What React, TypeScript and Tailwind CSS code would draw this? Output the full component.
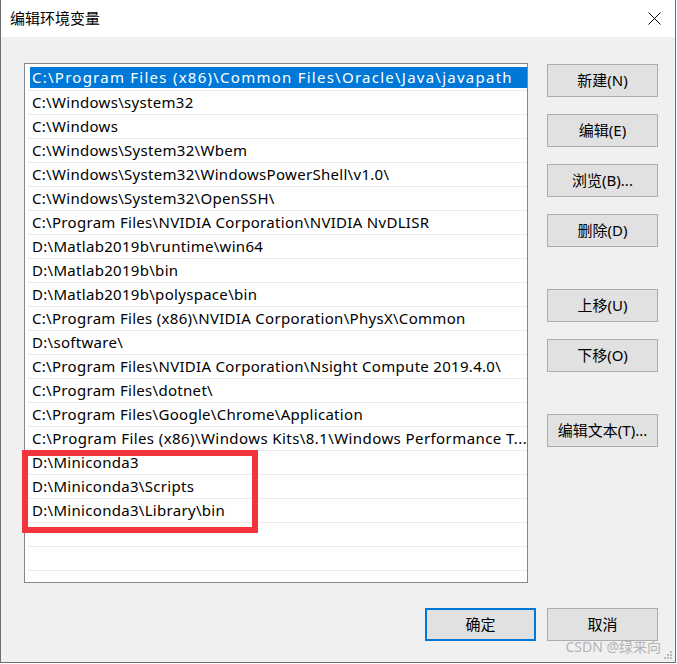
import React from 'react';

const paths: string[] = [
    'C:\\Program Files (x86)\\Common Files\\Oracle\\Java\\javapath',
    'C:\\Windows\\system32',
    'C:\\Windows',
    'C:\\Windows\\System32\\Wbem',
    'C:\\Windows\\System32\\WindowsPowerShell\\v1.0\\',
    'C:\\Windows\\System32\\OpenSSH\\',
    'C:\\Program Files\\NVIDIA Corporation\\NVIDIA NvDLISR',
    'D:\\Matlab2019b\\runtime\\win64',
    'D:\\Matlab2019b\\bin',
    'D:\\Matlab2019b\\polyspace\\bin',
    'C:\\Program Files (x86)\\NVIDIA Corporation\\PhysX\\Common',
    'D:\\software\\',
    'C:\\Program Files\\NVIDIA Corporation\\Nsight Compute 2019.4.0\\',
    'C:\\Program Files\\dotnet\\',
    'C:\\Program Files\\Google\\Chrome\\Application',
    'C:\\Program Files (x86)\\Windows Kits\\8.1\\Windows Performance T...',
    'D:\\Miniconda3',
    'D:\\Miniconda3\\Scripts',
    'D:\\Miniconda3\\Library\\bin',
    '',
    '',
    '',
];

function WinButton({ label, primary }: { label: string; primary?: boolean }) {
    return (
        <button
            className={
                primary
                    ? 'w-[111px] h-[33px] bg-[#e1e1e1] border-2 border-[#0078d7] text-[15px] text-black leading-none'
                    : 'w-[111px] h-[33px] bg-[#e1e1e1] border border-[#adadad] text-[15px] text-black leading-none'
            }
        >
            {label}
        </button>
    );
}

export default function App() {
    return (
        <div
            className="relative w-[676px] h-[663px] bg-[#f0f0f0] border-l border-r border-b border-[#6e6e6e] overflow-hidden"
            style={{ fontFamily: '"Noto Sans", "Noto Sans CJK SC", sans-serif' }}
        >
            {/* title bar */}
            <div className="h-[37px] bg-white flex items-center justify-between pl-[9px] pr-[14px]">
                <span className="text-[15px] text-black">编辑环境变量</span>
                <svg width="13" height="13" viewBox="0 0 13 13">
                    <path d="M0.5 0.5 L12.5 12.5 M12.5 0.5 L0.5 12.5" stroke="#000" strokeWidth="1" />
                </svg>
            </div>

            <div className="flex mt-[26px] ml-[23px]">
                {/* path list */}
                <div className="w-[504px] h-[520px] border border-[#828790] bg-white overflow-hidden pt-[1px]">
                    {paths.map((p, i) => (
                        <div key={i} className="h-[24px] ml-[2px] border-b border-[#ececec] text-[15px] text-black">
                            {i === 0 ? (
                                <div className="h-[21px] mt-[2px] ml-[3px] bg-[#0078d7] text-white pl-[2px] flex items-center whitespace-nowrap tracking-[1.25px]">
                                    {p}
                                </div>
                            ) : (
                                <div
                                    className={
                                        i === 15
                                            ? 'h-[23px] pl-[5px] flex items-center whitespace-nowrap tracking-[0.42px]'
                                            : 'h-[23px] pl-[5px] flex items-center whitespace-nowrap tracking-[0.3px]'
                                    }
                                >
                                    {p}
                                </div>
                            )}
                        </div>
                    ))}
                </div>

                {/* side buttons */}
                <div className="flex flex-col ml-[19px] pt-[1px]">
                    <div className="flex flex-col gap-[17px]">
                        <WinButton label="新建(N)" />
                        <WinButton label="编辑(E)" />
                        <WinButton label="浏览(B)..." />
                        <WinButton label="删除(D)" />
                    </div>
                    <div className="flex flex-col gap-[17px] mt-[42px]">
                        <WinButton label="上移(U)" />
                        <WinButton label="下移(O)" />
                    </div>
                    <div className="mt-[42px]">
                        <WinButton label="编辑文本(T)..." />
                    </div>
                </div>
            </div>

            {/* bottom buttons */}
            <div className="flex justify-end gap-[11px] mt-[25px] pr-[17px]">
                <WinButton label="确定" primary />
                <WinButton label="取消" />
            </div>

            {/* red highlight */}
            <div className="absolute left-[21px] top-[450px] w-[236px] h-[83px] border-[6px] border-[#f2353d]" />

            {/* watermark */}
            <div className="absolute right-[14px] top-[640px] text-[14px] text-[#b4b4b4] leading-none">CSDN @绿来向</div>

            {/* resize grip */}
            <svg className="absolute right-[2px] bottom-[2px]" width="10" height="10" viewBox="0 0 10 10">
                <rect x="7" y="1" width="2" height="2" fill="#bcbcbc" />
                <rect x="4" y="4" width="2" height="2" fill="#bcbcbc" />
                <rect x="7" y="4" width="2" height="2" fill="#bcbcbc" />
                <rect x="1" y="7" width="2" height="2" fill="#bcbcbc" />
                <rect x="4" y="7" width="2" height="2" fill="#bcbcbc" />
                <rect x="7" y="7" width="2" height="2" fill="#bcbcbc" />
            </svg>
        </div>
    );
}
